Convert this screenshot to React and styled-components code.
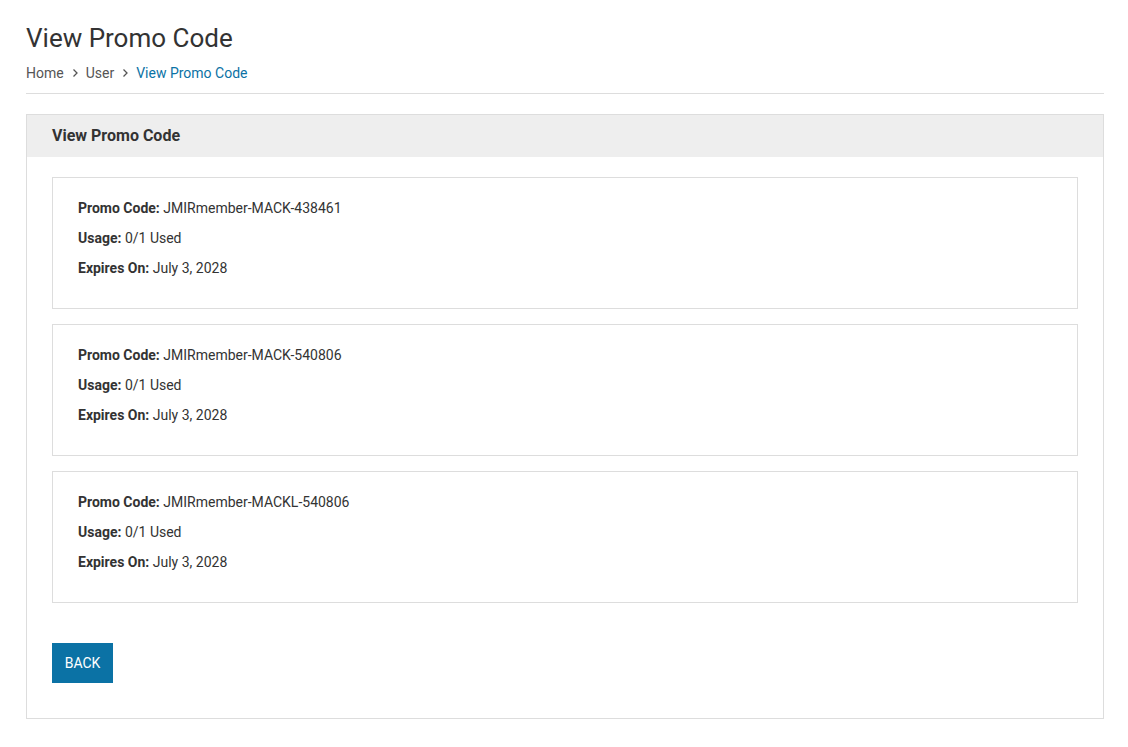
import React from "react";
import styled, { createGlobalStyle } from "styled-components";

const promoCodes = [
  { code: "JMIRmember-MACK-438461", usage: "0/1 Used", expires: "July 3, 2028" },
  { code: "JMIRmember-MACK-540806", usage: "0/1 Used", expires: "July 3, 2028" },
  { code: "JMIRmember-MACKL-540806", usage: "0/1 Used", expires: "July 3, 2028" },
];

const Chevron = () => (
  <svg width="8" height="10" viewBox="0 0 8 10" fill="none">
    <path d="M2.5 1.5L6 5L2.5 8.5" stroke="#555" strokeWidth="1.3" />
  </svg>
);

const App = () => {
  return (
    <>
      <GlobalStyle />
      <Page>
        <Title>View Promo Code</Title>
        <Breadcrumb>
          <Crumb>Home</Crumb>
          <Chevron />
          <Crumb>User</Crumb>
          <Chevron />
          <Crumb $active>View Promo Code</Crumb>
        </Breadcrumb>
        <Divider />
        <Panel>
          <PanelHeader>View Promo Code</PanelHeader>
          <PanelBody>
            <CardList>
              {promoCodes.map((item) => (
                <PromoCard key={item.code}>
                  <Line>
                    <Label>Promo Code:</Label> {item.code}
                  </Line>
                  <Line>
                    <Label>Usage:</Label> {item.usage}
                  </Line>
                  <Line>
                    <Label>Expires On:</Label> {item.expires}
                  </Line>
                </PromoCard>
              ))}
            </CardList>
            <BackButton>BACK</BackButton>
          </PanelBody>
        </Panel>
      </Page>
    </>
  );
};

export default App;

const GlobalStyle = createGlobalStyle`
  body {
    margin: 0;
    background: #fff;
    font-family: Roboto, "Liberation Sans", sans-serif;
    color: #333;
  }
`;

const Page = styled.div`
  padding: 20px 24px 0 26px;
`;

const Title = styled.h1`
  margin: 0;
  font-size: 26px;
  font-weight: 400;
  line-height: 36px;
  color: #333;
`;

const Breadcrumb = styled.div`
  display: flex;
  align-items: center;
  gap: 7px;
  margin-top: 7px;
  font-size: 14px;
  line-height: 20px;
`;

const Crumb = styled.span`
  color: ${({ $active }) => ($active ? "#0b72a5" : "#555")};
`;

const Divider = styled.div`
  height: 1px;
  background: #ddd;
  margin-top: 10px;
`;

const Panel = styled.div`
  margin-top: 20px;
  border: 1px solid #ddd;
`;

const PanelHeader = styled.div`
  box-sizing: border-box;
  height: 42px;
  display: flex;
  align-items: center;
  padding: 0 25px 2px;
  background: #eee;
  font-size: 16px;
  font-weight: 700;
  color: #333;
`;

const PanelBody = styled.div`
  display: flex;
  flex-direction: column;
  align-items: flex-start;
  gap: 40px;
  padding: 20px 25px 35px;
`;

const CardList = styled.div`
  align-self: stretch;
  display: flex;
  flex-direction: column;
  gap: 15px;
`;

const PromoCard = styled.div`
  border: 1px solid #ddd;
  padding: 15px 25px 25px;
`;

const Line = styled.div`
  font-size: 14px;
  line-height: 30px;
  color: #333;
`;

const Label = styled.strong`
  font-weight: 700;
`;

const BackButton = styled.button`
  height: 40px;
  width: 61px;
  padding: 0;
  border: none;
  border-radius: 0;
  background: #0b72a5;
  color: #fff;
  font-family: Roboto, "Liberation Sans", sans-serif;
  font-size: 14px;
  cursor: pointer;
`;
